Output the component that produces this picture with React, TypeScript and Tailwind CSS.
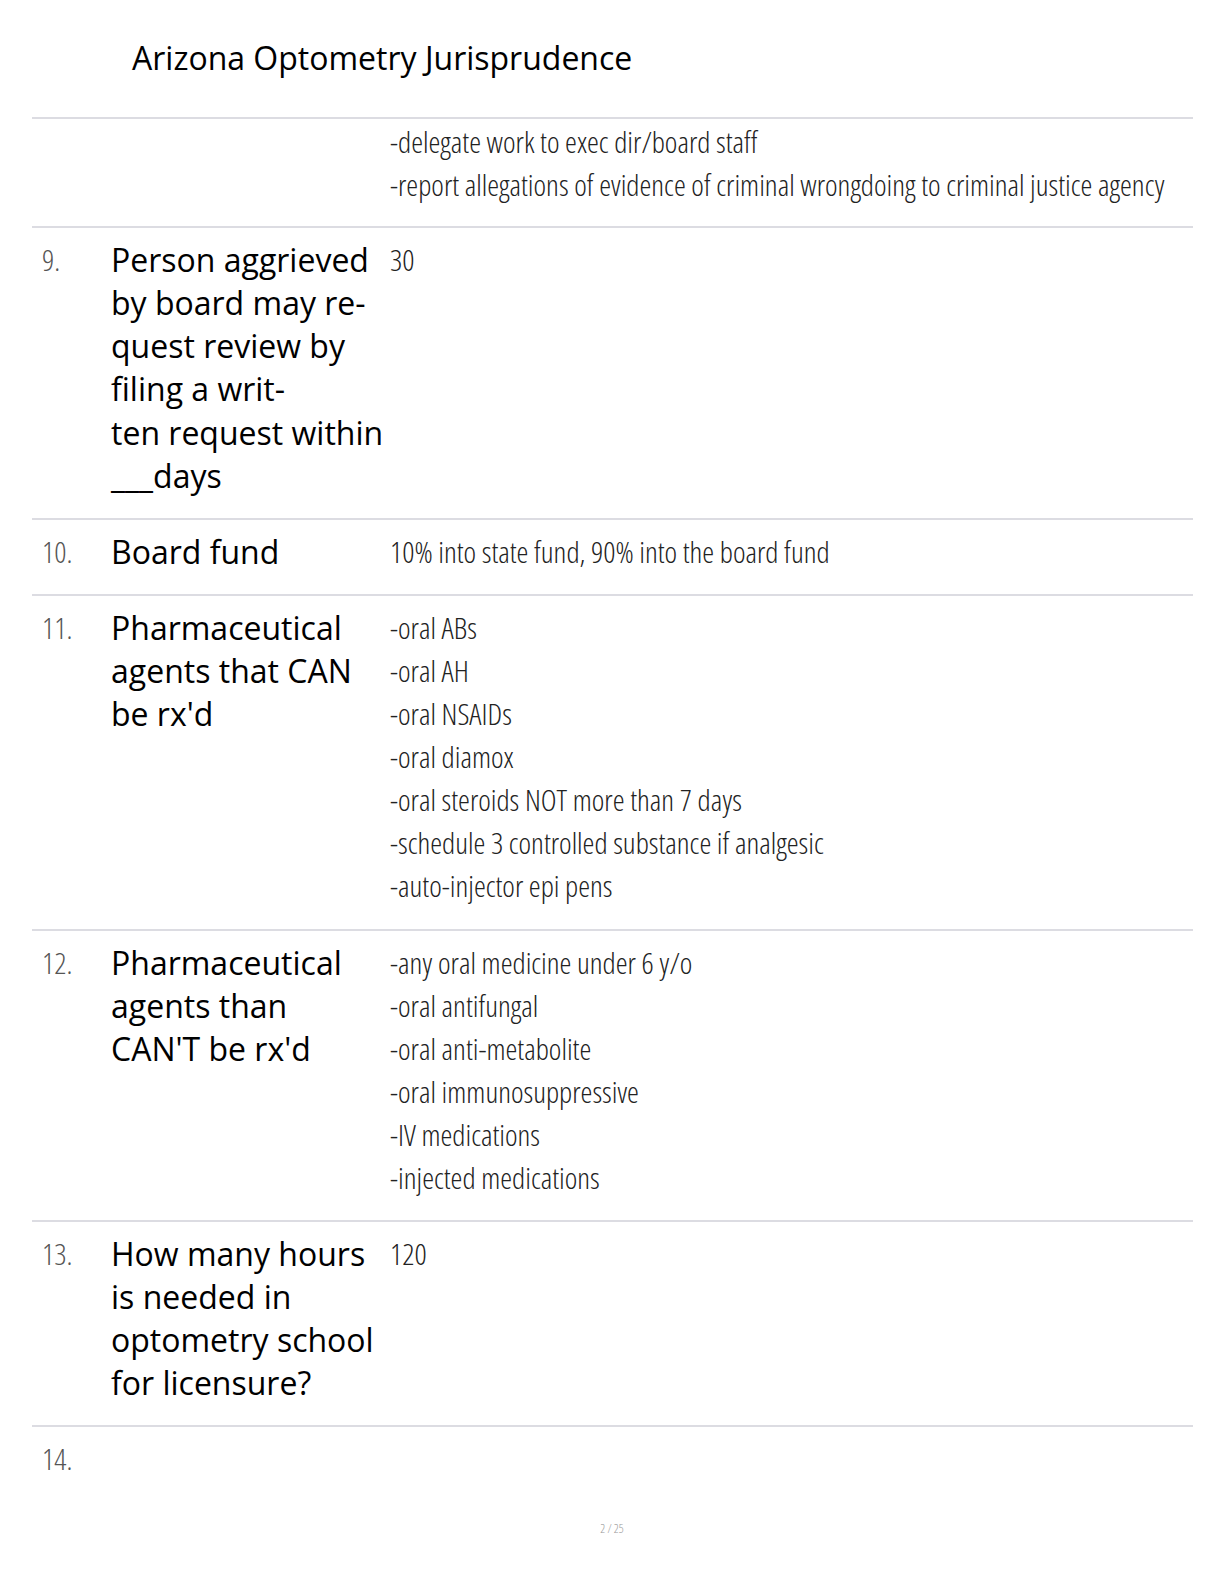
import type React from 'react';

interface Row {
  num?: string;
  question?: React.ReactNode;
  answers: string[];
  first?: boolean;
}

const rows: Row[] = [
  {
    first: true,
    answers: [
      '-delegate work to exec dir/board staff',
      '-report allegations of evidence of criminal wrongdoing to criminal justice agency',
    ],
  },
  {
    num: '9.',
    question: (
      <>
        Person aggrieved
        <br />
        by board may re-
        <br />
        quest review by
        <br />
        filing a writ-
        <br />
        ten request within
        <br />
        ___days
      </>
    ),
    answers: ['30'],
  },
  {
    num: '10.',
    question: 'Board fund',
    answers: ['10% into state fund, 90% into the board fund'],
  },
  {
    num: '11.',
    question: (
      <>
        Pharmaceutical
        <br />
        agents that CAN
        <br />
        be rx'd
      </>
    ),
    answers: [
      '-oral ABs',
      '-oral AH',
      '-oral NSAIDs',
      '-oral diamox',
      '-oral steroids NOT more than 7 days',
      '-schedule 3 controlled substance if analgesic',
      '-auto-injector epi pens',
    ],
  },
  {
    num: '12.',
    question: (
      <>
        Pharmaceutical
        <br />
        agents than
        <br />
        CAN'T be rx'd
      </>
    ),
    answers: [
      '-any oral medicine under 6 y/o',
      '-oral antifungal',
      '-oral anti-metabolite',
      '-oral immunosuppressive',
      '-IV medications',
      '-injected medications',
    ],
  },
  {
    num: '13.',
    question: (
      <>
        How many hours
        <br />
        is needed in
        <br />
        optometry school
        <br />
        for licensure?
      </>
    ),
    answers: ['120'],
  },
  {
    num: '14.',
    answers: [],
  },
];

const thin = "font-['Open_Sans',sans-serif] font-light font-stretch-[75%]";

export default function App() {
  return (
    <div className="w-[1224px] h-[1584px] bg-white flex flex-col font-['Open_Sans',sans-serif] text-black">
      {/* Title */}
      <div className="h-[117px] pl-[132px] pt-[37px]">
        <h1 className="text-[32px] leading-[42px] font-normal">Arizona Optometry Jurisprudence</h1>
      </div>

      {/* Flashcard table */}
      <div className="ml-[32px] w-[1161px]">
        {rows.map((row, i) => (
          <div
            key={i}
            className={`grid grid-cols-[79px_279px_1fr] border-t-2 border-[#dcdce2] ${
              row.first ? 'pt-[1px] pb-[20px]' : 'pt-[10px] pb-[21px]'
            }`}
          >
            <div className={`pl-[10px] text-[30px] leading-[43.1px] text-[#555] ${thin}`}>{row.num}</div>
            <div className="text-[32px] leading-[43.1px] whitespace-nowrap">{row.question}</div>
            <div className={`text-[30px] leading-[43.1px] text-[#222] ${thin}`}>
              {row.answers.map((a) => (
                <div key={a} className="whitespace-nowrap">
                  {a}
                </div>
              ))}
            </div>
          </div>
        ))}
      </div>

      {/* Page number */}
      <div className={`mt-auto pb-[48px] text-center text-[12px] leading-[15px] text-[#999] ${thin}`}>2 / 25</div>
    </div>
  );
}
